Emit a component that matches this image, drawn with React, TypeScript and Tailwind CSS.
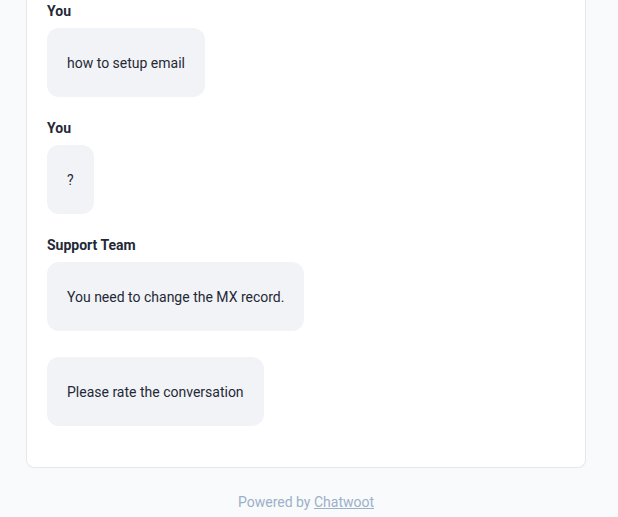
const messages = [
  { author: 'You', text: 'how to setup email' },
  { author: 'You', text: '?' },
  { author: 'Support Team', text: 'You need to change the MX record.' },
  { author: null, text: 'Please rate the conversation' },
];

export default function App() {
  return (
    <div className="min-h-screen bg-[#f9fafb] font-['Roboto',sans-serif]">
      <div className="ml-[26px] w-[560px]">
        <div className="bg-white border border-t-0 border-[#e5e7eb] rounded-b-lg px-5 pt-px pb-[41px]">
          {messages.map((m, i) => (
            <div key={i} className={i === 0 ? '' : m.author ? 'mt-[21px]' : 'mt-[26px]'}>
              {m.author && (
                <div className="text-sm font-bold leading-5 text-[#1f2937]">{m.author}</div>
              )}
              <div className={m.author ? 'mt-[7px] flex' : 'flex'}>
                <div className="bg-[#f2f3f6] rounded-xl px-5 pt-[25px] pb-[23px] text-sm leading-[21px] text-[#1f2937]">
                  {m.text}
                </div>
              </div>
            </div>
          ))}
        </div>
        <div className="mt-[24px] text-center text-sm leading-5 text-[#9bb0c9]">
          Powered by <span className="underline">Chatwoot</span>
        </div>
      </div>
    </div>
  );
}
